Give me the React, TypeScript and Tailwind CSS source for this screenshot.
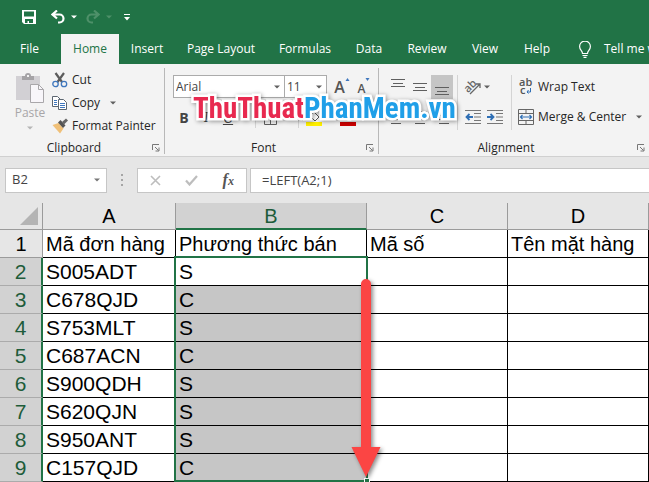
import { useState } from "react";
import type { ReactNode } from "react";

const tabs = [
  { name: "File", width: "w-[59px]" },
  { name: "Home", width: "w-[58px]" },
  { name: "Insert", width: "w-[56px]" },
  { name: "Page Layout", width: "w-[92px]" },
  { name: "Formulas", width: "w-[76px]" },
  { name: "Data", width: "w-[52px]" },
  { name: "Review", width: "w-[64px]" },
  { name: "View", width: "w-[52px]" },
  { name: "Help", width: "w-[52px]" },
];

const rows = [
  ["S005ADT", "S"],
  ["C678QJD", "C"],
  ["S753MLT", "S"],
  ["C687ACN", "C"],
  ["S900QDH", "S"],
  ["S620QJN", "S"],
  ["S950ANT", "S"],
  ["C157QJD", "C"],
];

function Caret({ className = "text-[#606060]" }: { className?: string }) {
  return (
    <svg width="6" height="4" viewBox="0 0 6 4" className={`shrink-0 ${className}`}>
      <path d="M0 0.5h6L3 3.5z" fill="currentColor" />
    </svg>
  );
}

function Lines({ d }: { d: string }) {
  return (
    <svg width="16" height="16" viewBox="0 0 16 16" stroke="#5f5f5f" fill="none">
      <path d={d} />
    </svg>
  );
}

function IconButton({
  label,
  className = "",
  children,
}: {
  label: string;
  className?: string;
  children: ReactNode;
}) {
  return (
    <button
      type="button"
      aria-label={label}
      className={`flex h-6 w-[22px] shrink-0 items-center justify-center ${className}`}
    >
      {children}
    </button>
  );
}

function GroupLabel({ name }: { name: string }) {
  return (
    <div className="mt-auto flex h-3 items-center pr-1 leading-3">
      <span className="flex-1 pr-1 text-center">{name}</span>
      <button type="button" aria-label={`${name} settings`}>
        <svg width="8" height="8" viewBox="0 0 8 8" stroke="#777" fill="none">
          <path d="M0.5 6V0.5H7M3 3l3.5 3.5M7 3.5V7H3.5" />
        </svg>
      </button>
    </div>
  );
}

function ClipboardGroup() {
  return (
    <section className="flex w-[165px] shrink-0 flex-col border-r border-[#b8b8b8]">
      <div className="flex">
        <button
          type="button"
          className="flex w-[52px] flex-col items-center pt-1 pl-2 text-[#a8a6a8]"
        >
          <svg width="30" height="32" viewBox="0 0 30 32">
            <path d="M1 4h24v24H1z" fill="#d2d0d4" />
            <path d="M7 4h3a3 3 0 0 1 6 0h3v4H7z" fill="#a5a3a6" />
            <path d="M12 3h2v2h-2z" fill="#f3f3f3" />
            <path d="M15.500 12.500h8l5 5v13h-13z" fill="#f8f6fa" stroke="#a9a7aa" />
            <path d="M23.500 12.500v5h5" fill="none" stroke="#a9a7aa" />
          </svg>
          <span className="leading-[18px]">Paste</span>
          <Caret className="mt-1 text-[#b5b5b5]" />
        </button>
        <div className="flex flex-col">
          <button type="button" className="flex h-[23px] items-center gap-1">
            <svg width="16" height="16" viewBox="0 0 16 16" fill="none">
              <path d="M3.500 1l6.500 9M12 1L5.500 10" stroke="#5c5c5c" strokeWidth="2.200" />
              <circle cx="3.500" cy="12" r="2.700" stroke="#3f77bd" strokeWidth="1.300" />
              <circle cx="12" cy="12" r="2.700" stroke="#3f77bd" strokeWidth="1.300" />
            </svg>
            Cut
          </button>
          <button type="button" className="flex h-[23px] items-center gap-1">
            <svg width="16" height="16" viewBox="0 0 16 16" stroke="#5c6670" fill="#fff">
              <path d="M0.500 1.500h5l3 3v7h-8z" />
              <path d="M2 5.500h3M2 7.500h3M2 9.500h3" stroke="#3f77bd" />
              <path d="M6.500 4.500h5l3 3v7h-8z" />
              <path d="M8 8.500h5M8 10.500h5M8 12.500h5" stroke="#3f77bd" />
            </svg>
            Copy
            <span className="pl-1.5">
              <Caret />
            </span>
          </button>
          <button type="button" className="flex h-[23px] items-center gap-1 whitespace-nowrap">
            <svg width="16" height="16" viewBox="0 0 16 16">
              <path d="M0.500 7l6-2 5 5.500-3.500 5z" fill="#f0c078" />
              <path d="M6 4.500l2.500-2.500 5 5.500-2.500 2.500z" fill="#555" />
              <path d="M10 4L14 0.500l2 2-4 4z" fill="#666" />
            </svg>
            Format Painter
          </button>
        </div>
      </div>
      <GroupLabel name="Clipboard" />
    </section>
  );
}

function FontGroup() {
  return (
    <section className="flex w-[214px] shrink-0 flex-col border-r border-[#b8b8b8] pt-[7px]">
      <div className="flex pl-2">
        <label className="relative flex h-[23px] w-28 items-center border border-[#ababab] bg-white">
          <select
            aria-label="Font"
            className="w-full appearance-none bg-transparent pl-0.5 text-[#444] outline-none"
          >
            <option>Arial</option>
          </select>
          <span className="absolute right-1">
            <Caret />
          </span>
        </label>
        <label className="relative -ml-px flex h-[23px] w-[43px] items-center border border-[#ababab] bg-white">
          <select
            aria-label="Font size"
            className="w-full appearance-none bg-transparent pl-0.5 text-[#444] outline-none"
          >
            <option>11</option>
          </select>
          <span className="absolute right-1">
            <Caret />
          </span>
        </label>
        <div className="flex pl-1 text-[#555]">
          <IconButton label="Increase font size">
            <span className="text-base font-semibold">A</span>
            <svg width="5" height="3" viewBox="0 0 4 3" className="mb-4">
              <path d="M0 3h4L2 0z" fill="#3f77bd" />
            </svg>
          </IconButton>
          <IconButton label="Decrease font size">
            <span className="pt-1 font-semibold">A</span>
            <svg width="5" height="3" viewBox="0 0 4 3" className="mb-4">
              <path d="M0 0h4L2 3z" fill="#3f77bd" />
            </svg>
          </IconButton>
        </div>
      </div>
      <div className="mt-[7px] flex h-6 items-center pl-2 text-sm text-[#444]">
        <IconButton label="Bold">
          <b>B</b>
        </IconButton>
        <IconButton label="Italic">
          <i className="font-serif">I</i>
        </IconButton>
        <IconButton label="Underline">
          <u>U</u>
        </IconButton>
        <span className="ml-4 h-5 w-px bg-[#d4d4d4]" />
        <IconButton label="Borders" className="ml-1">
          <Lines d="M1.500 2v12.500h12V2M7.500 2v12M2 8h12" />
        </IconButton>
        <span className="ml-4 h-5 w-px bg-[#d4d4d4]" />
        <IconButton label="Fill color" className="ml-1">
          <svg width="16" height="16" viewBox="0 0 16 16">
            <path d="M0 12h16v4H0z" fill="#ffef00" />
            <path d="M4 6l4-4 5 5-4 4z" fill="#fff" stroke="#555" />
          </svg>
        </IconButton>
        <IconButton label="Font color" className="ml-3">
          <svg width="16" height="16" viewBox="0 0 16 16">
            <path d="M0 12h16v4H0z" fill="#cc0000" />
            <path d="M4 10l4-9 4 9M5.500 7h5" fill="none" stroke="#555" />
          </svg>
        </IconButton>
      </div>
      <GroupLabel name="Font" />
    </section>
  );
}

function AlignmentGroup() {
  return (
    <section className="flex min-w-[270px] flex-1 flex-col pt-[7px]">
      <div className="flex h-[55px] pl-2">
        <div className="flex w-[71px] shrink-0 flex-col gap-1.5 border-r border-[#d4d4d4]">
          <div className="flex">
            <IconButton label="Top align">
              <Lines d="M1 0.500h14M3 4.500h10M1 7.500h14" />
            </IconButton>
            <IconButton label="Middle align">
              <Lines d="M1 4.500h14M3 8.500h10M1 11.500h14" />
            </IconButton>
            <IconButton label="Bottom align" className="bg-[#c5c5c5]">
              <Lines d="M1 8.500h14M3 12.500h10M1 15.500h14" />
            </IconButton>
          </div>
          <div className="flex">
            <IconButton label="Align left">
              <Lines d="M1 2.500h14M1 6.500h10M1 10.500h14M1 14.500h10" />
            </IconButton>
            <IconButton label="Center">
              <Lines d="M1 2.500h14M3 6.500h10M1 10.500h14M3 14.500h10" />
            </IconButton>
            <IconButton label="Align right">
              <Lines d="M1 2.500h14M5 6.500h10M1 10.500h14M5 14.500h10" />
            </IconButton>
          </div>
        </div>
        <div className="flex w-[54px] shrink-0 flex-col gap-1.5 border-r border-[#d4d4d4] pl-1">
          <div className="flex items-center">
            <IconButton label="Orientation">
              <svg width="18" height="16" viewBox="0 0 18 16" className="overflow-visible">
                <text
                  x="0"
                  y="11"
                  transform="rotate(-45 6 8)"
                  fontSize="11"
                  fontWeight="600"
                  fill="#666"
                >
                  ab
                </text>
                <path d="M6 15L16 5M12 5h4v4" fill="none" stroke="#666" strokeWidth="1.300" />
              </svg>
            </IconButton>
            <Caret />
          </div>
          <div className="flex">
            <IconButton label="Decrease indent">
              <svg width="16" height="14" viewBox="0 0 16 14" fill="none">
                <path d="M0 0.500h16M9 3.500h7M9 7h7M9 10.500h7M0 13.500h16" stroke="#777" />
                <path d="M8 7H1.500M4.500 4L1.500 7l3 3" stroke="#2f6fb5" strokeWidth="1.800" />
              </svg>
            </IconButton>
            <IconButton label="Increase indent">
              <svg width="16" height="14" viewBox="0 0 16 14" fill="none">
                <path d="M0 0.500h16M9 3.500h7M9 7h7M9 10.500h7M0 13.500h16" stroke="#777" />
                <path d="M0 7h6.500M3.500 4l3 3-3 3" stroke="#2f6fb5" strokeWidth="1.800" />
              </svg>
            </IconButton>
          </div>
        </div>
        <div className="flex flex-col gap-1.5 pl-1.5">
          <button type="button" className="flex h-6 items-center gap-1">
            <svg width="16" height="18" viewBox="0 0 16 18" className="overflow-visible">
              <text x="1" y="8" fontSize="11" fontWeight="600" fill="#555">
                ab
              </text>
              <text x="2" y="16" fontSize="11" fontWeight="600" fill="#555">
                c
              </text>
              <path d="M12.500 10v4H9M10.500 12L9 14l1.500 1.500" fill="none" stroke="#2f6fb5" />
            </svg>
            Wrap Text
          </button>
          <button type="button" className="flex h-6 items-center gap-1 whitespace-nowrap">
            <svg width="16" height="16" viewBox="0 0 16 16" fill="none" stroke="#666">
              <path d="M0.500 0.500h15v15H0.500zM0.500 4.500h15M0.500 11.500h15M8 0.500v4M8 11.500v4" />
              <path
                d="M2.500 8h11M4.500 6l-2 2 2 2M11.500 6l2 2-2 2"
                stroke="#2f6fb5"
                strokeWidth="1.200"
              />
            </svg>
            Merge &amp; Center
            <span className="pl-1.5">
              <Caret />
            </span>
          </button>
        </div>
      </div>
      <GroupLabel name="Alignment" />
    </section>
  );
}

function FormulaBar() {
  const [formula, setFormula] = useState("=LEFT(A2;1)");

  return (
    <div className="flex h-[46px] items-center bg-[#e6e6e6] pl-[5px] text-[13px] text-[#444]">
      <label className="relative flex h-[25px] w-[102px] shrink-0 items-center border border-[#c6c6c6] bg-white">
        <input
          aria-label="Name box"
          defaultValue="B2"
          className="w-full bg-transparent pl-1.5 outline-none"
        />
        <span className="absolute right-1.5">
          <Caret className="text-[#777]" />
        </span>
      </label>
      <svg width="2" height="12" viewBox="0 0 2 12" className="mx-3.5 shrink-0">
        <path d="M0 0h2v2H0zM0 5h2v2H0zM0 10h2v2H0z" fill="#a5a5a5" />
      </svg>
      <div className="flex h-[25px] w-[110px] shrink-0 items-center justify-around border border-[#c6c6c6] bg-white">
        <button type="button" aria-label="Cancel">
          <svg width="11" height="11" viewBox="0 0 11 11">
            <path d="M1 1l9 9M10 1L1 10" stroke="#bdbdbd" strokeWidth="1.600" />
          </svg>
        </button>
        <button type="button" aria-label="Enter">
          <svg width="13" height="11" viewBox="0 0 13 11">
            <path d="M1 5.500L4.500 9.500L12 1" fill="none" stroke="#bdbdbd" strokeWidth="2.200" />
          </svg>
        </button>
        <button
          type="button"
          aria-label="Insert function"
          className="font-['Liberation_Serif',serif] text-base leading-4 font-bold text-[#555] italic"
        >
          f<span className="text-xs">x</span>
        </button>
      </div>
      <input
        aria-label="Formula"
        value={formula}
        onChange={(e) => setFormula(e.target.value)}
        className="ml-[3px] h-[25px] min-w-0 flex-1 border border-r-0 border-[#c6c6c6] bg-white pl-[11px] outline-none"
      />
    </div>
  );
}

function Sheet() {
  return (
    <div className="relative font-['Liberation_Sans',Arial,sans-serif] text-xl text-black">
      <table className="w-full table-fixed border-separate border-spacing-0">
        <colgroup>
          <col className="w-[43px]" />
          <col className="w-[133px]" />
          <col className="w-[191px]" />
          <col className="w-[141px]" />
          <col />
        </colgroup>
        <thead>
          <tr className="h-[27px] bg-[#e6e6e6] leading-6">
            <th className="border-r border-b border-[#9b9b9b] p-0">
              <svg width="18" height="18" viewBox="0 0 18 18" className="mr-1 ml-auto">
                <path d="M18 0v18H0z" fill="#b4b4b4" />
              </svg>
            </th>
            <th className="border-r border-b border-[#9b9b9b] p-0 font-normal">A</th>
            <th className="border-r border-b-2 border-r-[#9b9b9b] border-b-[#217346] bg-[#d2d2d2] p-0 font-normal text-[#1e5c3a]">
              B
            </th>
            <th className="border-r border-b border-[#9b9b9b] p-0 font-normal">C</th>
            <th className="border-r border-b border-[#9b9b9b] p-0 font-normal">D</th>
          </tr>
        </thead>
        <tbody>
          <tr className="h-7 leading-6 whitespace-nowrap">
            <th className="border-r border-b border-[#9b9b9b] bg-[#e6e6e6] p-0 font-normal">1</th>
            <td className="border-r border-b p-0 pl-[3px]">Mã đơn hàng</td>
            <td className="border-r border-b p-0 pl-[3px]">Phương thức bán</td>
            <td className="border-r border-b p-0 pl-[3px]">Mã số</td>
            <td className="border-r border-b p-0 pl-[3px]">Tên mặt hàng</td>
          </tr>
          {rows.map(([code, method], i) => (
            <tr key={code} className="h-7 text-[21px] leading-6">
              <th className="border-r-2 border-b border-r-[#217346] border-b-[#ababab] bg-[#d2d2d2] p-0 font-normal text-[#1e5c3a]">
                {i + 2}
              </th>
              <td className="border-r border-b p-0 pl-[3px]">{code}</td>
              <td className={`border-r border-b p-0 pl-[3px] ${i > 0 ? "bg-[#c6c6c6]" : ""}`}>
                {method}
              </td>
              <td className="border-r border-b p-0" />
              <td className="border-r border-b p-0" />
            </tr>
          ))}
        </tbody>
      </table>

      {/* selected range B2:B9 with its fill handle */}
      <div className="pointer-events-none absolute top-[53px] left-[174px] h-[226px] w-[194px] border-2 border-[#217346]">
        <span className="absolute -right-1 -bottom-1 size-1.5 border border-white bg-[#217346]" />
      </div>

      <svg
        width="40"
        height="206"
        viewBox="0 0 40 206"
        className="pointer-events-none absolute top-[75px] left-[346px] drop-shadow-[2px_2px_2px_rgba(0,0,0,0.45)]"
      >
        <path d="M15 169V6a5 5 0 0 1 10 0v163h9.500L20 199 5.500 169z" fill="#fb4544" />
      </svg>
    </div>
  );
}

export default function App() {
  const [active, setActive] = useState("Home");

  return (
    <div className="overflow-hidden bg-white font-['Open_Sans','Noto_Sans',sans-serif] text-xs text-[#262626]">
      <header className="bg-[#217346] text-white">
        <div className="flex h-[34px] items-center pl-[22px]">
          <button type="button" aria-label="Save">
            <svg width="14" height="14" viewBox="0 0 14 14">
              <path d="M0 0h14v14H2l-2-2z" fill="#fff" />
              <path d="M2 1.500h10v5H2zM3 9h8v4H7v-2H5.500v2H3z" fill="#217346" />
            </svg>
          </button>
          <button type="button" aria-label="Undo" className="ml-[15px] flex items-center gap-1.5">
            <svg width="14" height="14" viewBox="0 0 14 14" fill="none" stroke="#fff" strokeWidth="2.200">
              <path d="M6 0.500L1.500 4.500l4.500 4M1.500 4.500H8.500a4 4 0 0 1 0 8H7" />
            </svg>
            <Caret className="text-white" />
          </button>
          <button
            type="button"
            aria-label="Redo"
            className="ml-[9px] flex items-center gap-1.5 text-[#4e9069]"
          >
            <svg
              width="14"
              height="14"
              viewBox="0 0 14 14"
              fill="none"
              stroke="currentColor"
              strokeWidth="2.200"
            >
              <path d="M8 0.500l4.500 4-4.500 4M12.500 4.500H5.500a4 4 0 0 0 0 8H7" />
            </svg>
            <Caret className="text-[#4e9069]" />
          </button>
          <button type="button" aria-label="Customize toolbar" className="ml-3">
            <svg width="6" height="7" viewBox="0 0 6 7" fill="#fff">
              <path d="M0 0h6v1H0zM0 3h6L3 6.500z" />
            </svg>
          </button>
        </div>
        <nav className="flex h-[30px] items-stretch whitespace-nowrap">
          {tabs.map((tab) => (
            <button
              key={tab.name}
              type="button"
              onClick={() => setActive(tab.name)}
              className={`shrink-0 ${tab.width} ${
                active === tab.name ? "bg-[#f3f3f3] text-[#217346]" : ""
              } ${tab.name === "Home" ? "ml-0.5" : ""}`}
            >
              {tab.name}
            </button>
          ))}
          <button type="button" className="ml-4 flex shrink-0 items-center gap-[13px]">
            <svg width="12" height="17" viewBox="0 0 12 17" fill="none" stroke="#fff">
              <path
                d="M3.500 12.500c0-3-2.900-3.500-2.900-7a5.400 5.400 0 0 1 10.800 0c0 3.500-2.900 4-2.900 7zM3.500 14.500h5M4.500 16.300h3"
                strokeWidth="1.200"
              />
            </svg>
            Tell me what you want to do
          </button>
        </nav>
      </header>

      <div className="relative flex h-[93px] border-b border-[#d0d0d0] bg-[#f3f3f3] pt-1 pb-0.5">
        <ClipboardGroup />
        <FontGroup />
        <AlignmentGroup />
        <div className="pointer-events-none absolute top-[26px] left-[193px] font-['Liberation_Sans_Narrow','Roboto_Condensed','Liberation_Sans',sans-serif] text-[29px] leading-9 font-bold whitespace-nowrap drop-shadow-[1px_1px_2px_rgba(0,0,0,0.4)] [-webkit-text-stroke:5px_#fff] [paint-order:stroke_fill]">
          <span className="text-[#e8294f]">ThuThuat</span>
          <span className="text-[#1f9fe8]">PhanMem.vn</span>
        </div>
      </div>

      <FormulaBar />
      <Sheet />
    </div>
  );
}
